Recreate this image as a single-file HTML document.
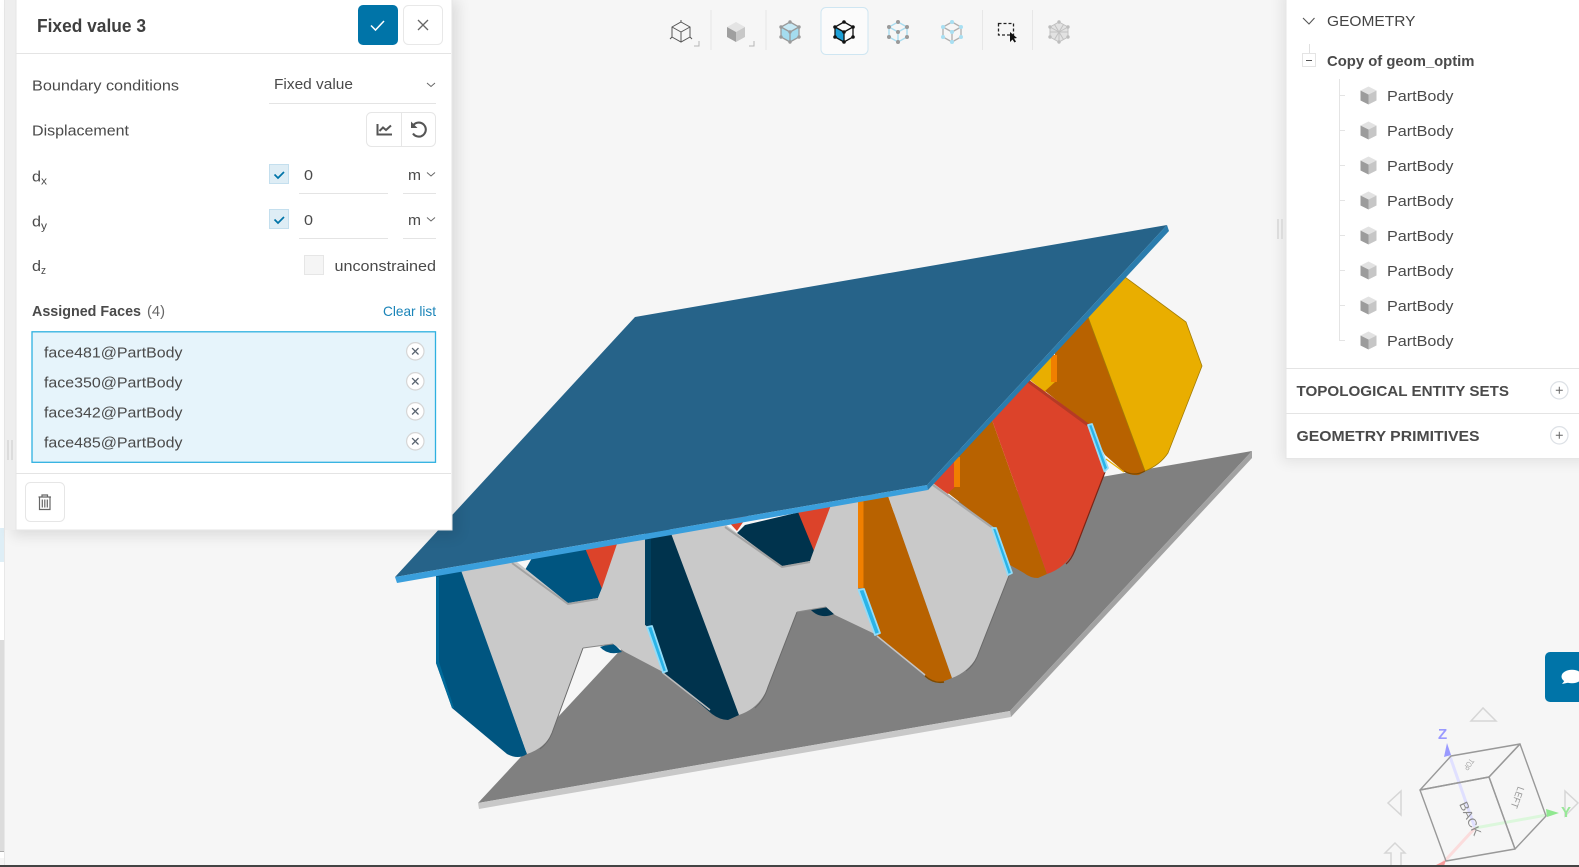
<!DOCTYPE html>
<html><head><meta charset="utf-8"><title>Fixed value 3</title>
<style>
html,body{margin:0;padding:0;background:#f6f6f6;width:1579px;height:867px;overflow:hidden}
svg{display:block;position:absolute;left:0;top:0}
text{font-family:"Liberation Sans",sans-serif;fill:#4a4a4a;font-size:15px}
.b{font-weight:bold;fill:#4a4a4a}
</style></head><body>
<svg width="1579" height="867" viewBox="0 0 1579 867" xmlns="http://www.w3.org/2000/svg">
<defs>
<filter id="sh" x="-10%" y="-10%" width="120%" height="120%"><feGaussianBlur stdDeviation="7"/></filter>
<g id="cube"><path d="M0,-8.5 L8,-4.5 L0,-0.5 L-8,-4.5Z" fill="#e2e2e2"/><path d="M-8,-4.5 L0,-0.5 L0,9.5 L-8,5.5Z" fill="#9c9c9c"/><path d="M8,-4.5 L0,-0.5 L0,9.5 L8,5.5Z" fill="#c6c6c6"/></g>
<g id="xc"><circle r="8.7" fill="#fff" stroke="#d6d6d6" stroke-width="1.2"/><path d="M-3.2,-3.2L3.2,3.2M3.2,-3.2L-3.2,3.2" stroke="#5a6470" stroke-width="1.3" fill="none"/></g>
<g id="pc"><circle r="8.7" fill="#fff" stroke="#dde1e6" stroke-width="1.2"/><path d="M-3.5,0H3.5M0,-3.5V3.5" stroke="#666" stroke-width="1" fill="none"/></g>
<path id="chev" d="M0,0L4,3.5L8,0" fill="none" stroke="#666" stroke-width="1"/>
</defs>

<rect width="1579" height="867" fill="#f6f6f6"/>
<rect x="0" y="0" width="4" height="528" fill="#fff"/>
<rect x="0" y="528" width="4" height="34" fill="#deeef6"/>
<rect x="0" y="562" width="4" height="78" fill="#fff"/>
<rect x="0" y="640" width="4" height="211" fill="#dcdcdc"/>
<rect x="0" y="851" width="4" height="1" fill="#aaa"/>
<rect x="0" y="852" width="4" height="6" fill="#fff"/>
<rect x="4" y="0" width="1" height="867" fill="#e8e8e8"/>

<!-- bottom plate -->
<polygon points="478,803 1010,711 1252,451 720,543" fill="#808080"/>
<polygon points="478,803 1010,711 1011,717 479,809" fill="#c8c8c8"/>
<polygon points="1010,711 1252,451 1252,458 1011,717" fill="#a2a2a2"/>

<!-- back right piece -->
<polygon points="1030,380 1052,356 1058,382 1045,392" fill="#e9ae00"/>
<path d="M1055,350 L1088,317 L1145,471 L1139,475 Q1130,476 1122,470 L1105,455 L1088,425 L1045,391 L1055,382Z" fill="#b86200"/>
<path d="M1106,459 L1124,472" stroke="#e9ae00" stroke-width="1.2" fill="none"/>
<rect x="1051" y="355" width="6" height="27" fill="#f07f00"/>
<path d="M1088,317 L1125,277 L1186,322 L1202,366 L1168,453 Q1160,465 1145,471Z" fill="#e9ae00" stroke="#a27c05" stroke-width=".8"/>
<path d="M1124,471 Q1134,477 1145,471" fill="none" stroke="#7d4a00" stroke-width="1.2"/>

<!-- middle right piece -->
<polygon points="930,482 957,455 957,488 948,494" fill="#dc432a"/>
<path d="M957,452 L992,420 L1047,574 L1038,578 Q1030,578 1024,573 L1010,565 L993,528 L948,493 L955,487Z" fill="#b86200"/>
<rect x="954" y="457" width="6" height="30" fill="#f07f00"/>
<path d="M992,420 L1028,381 L1088,425 L1105,472 L1075,550 Q1065,568 1047,574Z" fill="#dc432a"/>
<path d="M1028,381 L1088,425" stroke="#b53a25" stroke-width="3" fill="none"/>
<path d="M1105,472 L1075,550 Q1071,560 1066,564" stroke="#7a2515" stroke-width="1.2" fill="none"/>

<!-- notch pieces -->
<polygon points="525,570 532,558 587,548 602,588 598,598 568,604" fill="#005580"/>
<polygon points="585,548 620,541 602,589" fill="#dc432a"/>
<path d="M600,647 Q608,656 622,652 L613,643Z" fill="#005580"/>
<polygon points="725,518 748,515 737,531" fill="#dc432a"/>
<polygon points="737,533 745,525 800,512 814,550 810,561 782,566" fill="#00334d"/>
<polygon points="798,512 834,505 814,551" fill="#dc432a"/>
<path d="M810,609 Q820,620 834,614 L826,606Z" fill="#00334d"/>

<!-- left blue -->
<path d="M436,575 L462,570 L527,754 Q518,760 507,754 L452,708 L436,663Z" fill="#005580"/>
<path d="M436,577 L436,663 L452,708 L454,708 L439,662 L439,577Z" fill="#006a9a"/>

<!-- H piece 1 -->
<path d="M458,562 L512,558 L568,603 L598,598 L602,588 L618,541 L646,538 L646,625 L663,672 L625,652 L613,644 L583,648 L552,733 Q545,748 527,754Z" fill="#c9c9c9"/>
<path d="M512,563 L568,604 L598,599" fill="none" stroke="#a3a3a3" stroke-width="2"/>
<path d="M583,648 L552,733 Q548,743 540,749" fill="none" stroke="#6a6a6a" stroke-width="1"/>
<path d="M583,648 L613,644" fill="none" stroke="#888" stroke-width="1"/>

<!-- navy part 2 -->
<path d="M645,530 L673,528 L739,715 L728,720 Q720,720 712,714 L663,672 L646,625Z" fill="#00334d"/>
<polygon points="645,530 651,530 651,626 647,626 645,625" fill="#003f5f"/>
<path d="M663,673 L710,710" stroke="#bcbcbc" stroke-width="1.5" fill="none"/>

<!-- H piece 2 -->
<path d="M669,528 L725,524 L782,567 L810,561 L814,550 L831,505 L858,498 L858,588 L877,635 L835,615 L826,607 L797,612 L768,687 Q760,708 739,715Z" fill="#c9c9c9"/>
<path d="M725,527 L782,567 L810,562" fill="none" stroke="#a3a3a3" stroke-width="2"/>
<path d="M797,612 L826,607" stroke="#8a8a8a" stroke-width="1" fill="none"/>
<path d="M797,612 L768,687 Q764,700 755,708" stroke="#6a6a6a" stroke-width="1" fill="none"/>

<!-- orange part 3 -->
<path d="M863,495 L887,493 L952,678 L942,682 Q934,683 927,677 L877,635 L863,590Z" fill="#b86200"/>
<rect x="858" y="498" width="5.5" height="90" fill="#f07f00"/>
<path d="M877,636 L925,675" stroke="#c4c4c4" stroke-width="1.5" fill="none"/>
<path d="M925,676 Q934,684 944,682" stroke="#7d4a00" stroke-width="1.5" fill="none"/>

<!-- H piece 3 -->
<path d="M887,493 L933,483 L993,528 L1010,573 L977,657 Q968,672 952,678Z" fill="#c9c9c9"/>
<path d="M933,485 L993,528" stroke="#a8a8a8" stroke-width="2.2" fill="none"/>
<path d="M1010,573 L977,657 Q973,666 966,671" stroke="#6a6a6a" stroke-width="1" fill="none"/>

<!-- cyan slits -->
<g fill="#2ab4e8" stroke="#93dcf8" stroke-width="1.8" stroke-linejoin="round">
<polygon points="647,627 652,626 667,671 663,672.500"/>
<polygon points="858.500,590 864,589 880,633 875,635"/>
<polygon points="992,528 996,528 1012,573 1008,575"/>
<polygon points="1088,425 1092,424 1108,468 1104.500,471.500"/>
</g>

<!-- top plate -->
<polygon points="395,577 635,317 1167,225 927,485" fill="#266389"/>
<polygon points="395,577 927,485 928,490 397,583" fill="#3a9fdc"/>
<polygon points="927,485 1167,225 1169,231 928,490" fill="#2a7cad"/>

<!-- left panel -->
<rect x="12" y="0" width="446" height="536" fill="#000" opacity=".1" filter="url(#sh)"/>
<rect x="5" y="0" width="11" height="530" fill="#eeeeee"/>
<rect x="16" y="-2" width="436" height="532" fill="#fff" stroke="#e6e6e6"/>
<g fill="#dcdcdc"><rect x="7" y="440" width="2" height="20"/><rect x="11" y="440" width="2" height="20"/></g>

<text x="37" y="32" class="b" textLength="109" lengthAdjust="spacingAndGlyphs" style="font-size:18px;fill:#3f3f3f">Fixed value 3</text>
<rect x="358" y="5" width="40" height="40" rx="5" fill="#0074a8"/>
<path d="M371,25.500 L375.500,30 L384,21" fill="none" stroke="#fff" stroke-width="1.500"/>
<rect x="403.500" y="5.500" width="39" height="39" rx="5" fill="#fff" stroke="#e8e8e8"/>
<path d="M418,20 L428,30 M428,20 L418,30" stroke="#666" stroke-width="1.300" fill="none"/>
<rect x="16" y="53" width="435" height="1" fill="#e4e4e4"/>

<text x="32" y="90.500" textLength="147" lengthAdjust="spacingAndGlyphs">Boundary conditions</text>
<text x="274" y="89" textLength="79" lengthAdjust="spacingAndGlyphs">Fixed value</text>
<use href="#chev" x="427" y="83"/>
<rect x="269" y="103" width="167" height="1" fill="#e4e4e4"/>

<text x="32" y="135.500" textLength="97" lengthAdjust="spacingAndGlyphs">Displacement</text>
<rect x="366.500" y="112.500" width="69" height="34" rx="5" fill="#fff" stroke="#e6e6e6"/>
<rect x="401" y="113" width="1" height="33" fill="#e6e6e6"/>
<path d="M377.500,124 V134.500 H392 M379.500,131 L383,127.500 L386,130 L391,125.500" fill="none" stroke="#555" stroke-width="2"/>
<path d="M413.500,125 A7,7 0 1 1 413,133.500" fill="none" stroke="#555" stroke-width="2.100"/>
<path d="M411,121.500 V128 H417.500Z" fill="#555"/>

<text x="32" y="181.500" textLength="9" lengthAdjust="spacingAndGlyphs">d</text>
<text x="41" y="184.500" textLength="6" lengthAdjust="spacingAndGlyphs" style="font-size:11px">x</text>
<rect x="269.500" y="164.500" width="19" height="19" fill="#deedf5" stroke="#c4dfee"/>
<path d="M274.500,174.500 L278,178 L284,172" fill="none" stroke="#0074a8" stroke-width="1.700"/>
<text x="304" y="180" textLength="9" lengthAdjust="spacingAndGlyphs">0</text>
<rect x="299" y="193" width="89" height="1" fill="#e4e4e4"/>
<text x="408" y="180" textLength="13" lengthAdjust="spacingAndGlyphs">m</text>
<use href="#chev" x="427" y="172.500"/>
<rect x="403" y="193" width="33" height="1" fill="#e4e4e4"/>

<text x="32" y="226.500" textLength="9" lengthAdjust="spacingAndGlyphs">d</text>
<text x="41" y="229.500" textLength="6" lengthAdjust="spacingAndGlyphs" style="font-size:11px">y</text>
<rect x="269.500" y="209.500" width="19" height="19" fill="#deedf5" stroke="#c4dfee"/>
<path d="M274.500,219.500 L278,223 L284,217" fill="none" stroke="#0074a8" stroke-width="1.700"/>
<text x="304" y="225" textLength="9" lengthAdjust="spacingAndGlyphs">0</text>
<rect x="299" y="238" width="89" height="1" fill="#e4e4e4"/>
<text x="408" y="225" textLength="13" lengthAdjust="spacingAndGlyphs">m</text>
<use href="#chev" x="427" y="217.500"/>
<rect x="403" y="238" width="33" height="1" fill="#e4e4e4"/>

<text x="32" y="271" textLength="9" lengthAdjust="spacingAndGlyphs">d</text>
<text x="41" y="274" textLength="5" lengthAdjust="spacingAndGlyphs" style="font-size:11px">z</text>
<rect x="304.500" y="255.500" width="19" height="19" fill="#f5f5f5" stroke="#e6e6e6"/>
<text x="334.500" y="271" textLength="101.500" lengthAdjust="spacingAndGlyphs">unconstrained</text>

<text x="32" y="316" class="b" textLength="109" lengthAdjust="spacingAndGlyphs">Assigned Faces</text>
<text x="147" y="316" textLength="18" lengthAdjust="spacingAndGlyphs" style="fill:#666">(4)</text>
<text x="383" y="316" textLength="53" lengthAdjust="spacingAndGlyphs" style="fill:#1a84b8;font-size:14px">Clear list</text>

<rect x="32" y="331.800" width="403.500" height="130.500" fill="#e6f4fb" stroke="#2eb0e0" stroke-width="1.300"/>
<text x="44" y="357.500" textLength="138.500" lengthAdjust="spacingAndGlyphs">face481@PartBody</text>
<text x="44" y="387.500" textLength="138.500" lengthAdjust="spacingAndGlyphs">face350@PartBody</text>
<text x="44" y="417.500" textLength="138.500" lengthAdjust="spacingAndGlyphs">face342@PartBody</text>
<text x="44" y="447.500" textLength="138.500" lengthAdjust="spacingAndGlyphs">face485@PartBody</text>
<use href="#xc" x="415.300" y="351.300"/>
<use href="#xc" x="415.300" y="381.300"/>
<use href="#xc" x="415.300" y="411.300"/>
<use href="#xc" x="415.300" y="441.300"/>

<rect x="16" y="473" width="435" height="1" fill="#e4e4e4"/>
<rect x="25.500" y="482.500" width="39" height="39" rx="5" fill="#fff" stroke="#e6e6e6"/>
<path d="M38.500,497 H51 M42,497 V495 H47.500 V497 M39.500,497 V509.500 H50 V497 M42.300,499.500 V507.500 M44.800,499.500 V507.500 M47.300,499.500 V507.500" fill="none" stroke="#666" stroke-width="1.200"/>

<!-- toolbar -->
<g fill="#e4e4e4" opacity=".8"><rect x="710.500" y="10" width="1" height="40"/><rect x="765.500" y="10" width="1" height="40"/><rect x="982" y="10" width="1" height="40"/><rect x="1032" y="10" width="1" height="40"/></g>
<path d="M694,46 H699 V41 M749,46 H754 V41" fill="none" stroke="#b5b5b5" stroke-width="1"/>

<g transform="translate(681,32)" fill="none" stroke="#555" stroke-width="1"><path d="M0,-10 L9,-5 L9,5 L0,10 L-9,5 L-9,-5Z M0,0 L-9,-5 M0,0 L9,-5 M0,0 V10"/><path d="M-11,7 L-9,5 M11,7 L9,5 M0,-12 V-10" /></g>
<g transform="translate(736,32)"><path d="M0,-10 L9,-5 L0,0 L-9,-5Z" fill="#e4e4e4"/><path d="M-9,-5 L0,0 V10 L-9,5Z" fill="#9f9f9f"/><path d="M9,-5 L0,0 V10 L9,5Z" fill="#c8c8c8"/></g>
<g transform="translate(790,32)"><path d="M0,-10 L9,-5 L9,5 L0,10 L-9,5 L-9,-5Z" fill="#a4dcef"/><path d="M0,-10 L9,-5 L0,0 L-9,-5Z" fill="#c6e9f5"/><path d="M0,-10 L9,-5 L9,5 L0,10 L-9,5 L-9,-5Z M0,0 L-9,-5 M0,0 L9,-5 M0,0 V10" fill="none" stroke="#9a9a9a" stroke-width="1.300"/><g fill="#9a9a9a"><circle cx="0" cy="-10" r="1.700"/><circle cx="9" cy="-5" r="1.700"/><circle cx="9" cy="5" r="1.700"/><circle cx="0" cy="10" r="1.700"/><circle cx="-9" cy="5" r="1.700"/><circle cx="-9" cy="-5" r="1.700"/><circle r="1.700"/></g></g>

<rect x="821" y="7.500" width="47" height="47" rx="5" fill="#fbfbfb" stroke="#cfe6f2"/>
<g transform="translate(844,32)"><path d="M-9,-5 L0,0 V10 L-9,5Z" fill="#1c9fd6"/><path d="M0,-10 L9,-5 L9,5 L0,10 L-9,5 L-9,-5Z M0,0 L-9,-5 M0,0 L9,-5 M0,0 V10" fill="none" stroke="#111" stroke-width="1.300"/><g fill="#111"><circle cx="0" cy="-10" r="1.800"/><circle cx="9" cy="-5" r="1.800"/><circle cx="9" cy="5" r="1.800"/><circle cx="0" cy="10" r="1.800"/><circle cx="-9" cy="5" r="1.800"/><circle cx="-9" cy="-5" r="1.800"/><circle r="1.800"/></g></g>

<g transform="translate(898,32)"><path d="M0,-10 L9,-5 L9,5 L0,10 L-9,5 L-9,-5Z M0,0 L-9,-5 M0,0 L9,-5 M0,0 V10" fill="none" stroke="#a8dcf0" stroke-width="1.400"/><g fill="#9a9a9a"><circle cx="0" cy="-10" r="2"/><circle cx="9" cy="-5" r="2"/><circle cx="9" cy="5" r="2"/><circle cx="0" cy="10" r="2"/><circle cx="-9" cy="5" r="2"/><circle cx="-9" cy="-5" r="2"/><circle r="2"/></g></g>
<g transform="translate(952,32)"><path d="M0,-10 L9,-5 L9,5 L0,10 L-9,5 L-9,-5Z M0,0 L-9,-5 M0,0 L9,-5 M0,0 V10" fill="none" stroke="#b0b0b0" stroke-width="1.300"/><g fill="#a8dff2"><circle cx="0" cy="-10" r="2"/><circle cx="9" cy="-5" r="2"/><circle cx="9" cy="5" r="2"/><circle cx="0" cy="10" r="2"/><circle cx="-9" cy="5" r="2"/><circle cx="-9" cy="-5" r="2"/><circle r="2"/></g></g>
<rect x="998.500" y="23.500" width="15" height="11.500" fill="none" stroke="#222" stroke-width="1.300" stroke-dasharray="3,2"/>
<path d="M1010,32 L1010,42 L1012.500,39.500 L1014.500,42.500 L1016,41.500 L1014,38.500 L1017,38Z" fill="#111"/>
<g transform="translate(1059,32)" opacity=".75"><path d="M0,-10 L9,-5 L9,5 L0,10 L-9,5 L-9,-5Z" fill="#dcdcdc"/><path d="M0,-10 L9,-5 L9,5 L0,10 L-9,5 L-9,-5Z M0,0 L-9,-5 M0,0 L9,-5 M0,0 V10 M-4.500,-7.500 L4.500,7.500 M4.500,-7.500 L-4.500,7.500 M-9,0 H9" fill="none" stroke="#b0b0b0" stroke-width="1"/><g fill="#aaa"><circle cx="0" cy="-10" r="1.700"/><circle cx="9" cy="-5" r="1.700"/><circle cx="9" cy="5" r="1.700"/><circle cx="0" cy="10" r="1.700"/><circle cx="-9" cy="5" r="1.700"/><circle cx="-9" cy="-5" r="1.700"/></g></g>

<!-- right panel -->
<rect x="1282" y="-10" width="310" height="472" fill="#000" opacity=".08" filter="url(#sh)"/>
<rect x="1286" y="-2" width="300" height="460.500" fill="#fff" stroke="#e6e6e6"/>
<g fill="#dcdcdc"><rect x="1277" y="219" width="2" height="20"/><rect x="1281" y="219" width="2" height="20"/></g>

<path d="M1303,18 L1309,24 L1314.500,18" fill="none" stroke="#555" stroke-width="1.100"/>
<text x="1327" y="26" textLength="88.500" lengthAdjust="spacingAndGlyphs" style="fill:#444">GEOMETRY</text>
<rect x="1309" y="44" width="1" height="9" fill="#e0e0e0"/>
<rect x="1302.500" y="53.500" width="13" height="13" fill="#fff" stroke="#e4e4e4"/>
<rect x="1306" y="60" width="6" height="1" fill="#555"/>
<text x="1327" y="66" class="b" textLength="147.500" lengthAdjust="spacingAndGlyphs">Copy of geom_optim</text>
<rect x="1339" y="79" width="1" height="262" fill="#e4e4e4"/>
<g fill="#e4e4e4"><rect x="1340" y="95" width="5" height="1"/><rect x="1340" y="130" width="5" height="1"/><rect x="1340" y="165" width="5" height="1"/><rect x="1340" y="200" width="5" height="1"/><rect x="1340" y="235" width="5" height="1"/><rect x="1340" y="270" width="5" height="1"/><rect x="1340" y="305" width="5" height="1"/><rect x="1340" y="340" width="5" height="1"/></g>
<use href="#cube" x="1368.500" y="95"/><use href="#cube" x="1368.500" y="130"/><use href="#cube" x="1368.500" y="165"/><use href="#cube" x="1368.500" y="200"/><use href="#cube" x="1368.500" y="235"/><use href="#cube" x="1368.500" y="270"/><use href="#cube" x="1368.500" y="305"/><use href="#cube" x="1368.500" y="340"/>
<text x="1387" y="101" textLength="66.500" lengthAdjust="spacingAndGlyphs">PartBody</text>
<text x="1387" y="136" textLength="66.500" lengthAdjust="spacingAndGlyphs">PartBody</text>
<text x="1387" y="171" textLength="66.500" lengthAdjust="spacingAndGlyphs">PartBody</text>
<text x="1387" y="206" textLength="66.500" lengthAdjust="spacingAndGlyphs">PartBody</text>
<text x="1387" y="241" textLength="66.500" lengthAdjust="spacingAndGlyphs">PartBody</text>
<text x="1387" y="276" textLength="66.500" lengthAdjust="spacingAndGlyphs">PartBody</text>
<text x="1387" y="311" textLength="66.500" lengthAdjust="spacingAndGlyphs">PartBody</text>
<text x="1387" y="346" textLength="66.500" lengthAdjust="spacingAndGlyphs">PartBody</text>
<rect x="1286" y="368" width="293" height="1" fill="#e4e4e4"/>
<text x="1296.500" y="396" class="b" textLength="212.500" lengthAdjust="spacingAndGlyphs">TOPOLOGICAL ENTITY SETS</text>
<use href="#pc" x="1559.300" y="390.300"/>
<rect x="1286" y="413" width="293" height="1" fill="#e4e4e4"/>
<text x="1296.500" y="441" class="b" textLength="183" lengthAdjust="spacingAndGlyphs">GEOMETRY PRIMITIVES</text>
<use href="#pc" x="1559.300" y="435.300"/>

<!-- chat -->
<path d="M1579,652 H1550 A5,5 0 0 0 1545,657 V697 A5,5 0 0 0 1550,702 H1579Z" fill="#0074a8"/>
<ellipse cx="1572" cy="676.500" rx="10.500" ry="6.700" fill="#fff"/>
<path d="M1565,680 L1562,684 L1569,682.500Z" fill="#fff"/>

<!-- nav cube -->
<polygon points="1483,708 1471,721 1496,721" fill="none" stroke="#d6d6d6" stroke-width="1.500"/>
<polygon points="1401,791 1388,803 1401,815" fill="none" stroke="#d6d6d6" stroke-width="1.500"/>
<polygon points="1565,791 1578,803 1565,816" fill="none" stroke="#d6d6d6" stroke-width="1.500"/>
<polygon points="1395,843 1385,853 1391,853 1391,866 1401,866 1401,853 1405,853" fill="none" stroke="#d6d6d6" stroke-width="1.500"/>
<path d="M1475,828 L1447,748" stroke="#e0e0ff" stroke-width="3"/>
<path d="M1447,743 L1444,757 L1451,755Z" fill="#9a9aff"/>
<path d="M1475,828 L1552,814" stroke="#dcf7dc" stroke-width="3"/>
<path d="M1559,813 L1546,809 L1547,817Z" fill="#90e890"/>
<path d="M1475,828 L1442,864" stroke="#fbdcdc" stroke-width="3"/>
<path d="M1434,866 L1446,860 L1444,866Z" fill="#f59a9a"/>
<g fill="none" stroke="#999" stroke-width="1.400" stroke-linejoin="round">
<polygon points="1420,790 1489,777 1515,849 1446,861"/>
<polygon points="1420,790 1451,756 1520,744 1489,777"/>
<polygon points="1489,777 1520,744 1546,816 1515,849"/>
</g>
<text transform="translate(1459,804) rotate(65)" style="font-size:12px;fill:#8a8a8a" textLength="36" lengthAdjust="spacingAndGlyphs">BACK</text>
<text transform="translate(1518,786) rotate(110)" style="font-size:10px;fill:#9a9a9a" textLength="22" lengthAdjust="spacingAndGlyphs">LEFT</text>
<text transform="translate(1470,758) rotate(125)" style="font-size:8px;fill:#a5a5a5" textLength="12" lengthAdjust="spacingAndGlyphs">TOP</text>
<text x="1438" y="739" style="font-size:15px;fill:#9a9aff;font-weight:bold">Z</text>
<text x="1561" y="817" style="font-size:15px;fill:#98e898;font-weight:bold">Y</text>

<rect x="0" y="865" width="1579" height="2" fill="#444"/>
</svg>
</body></html>
